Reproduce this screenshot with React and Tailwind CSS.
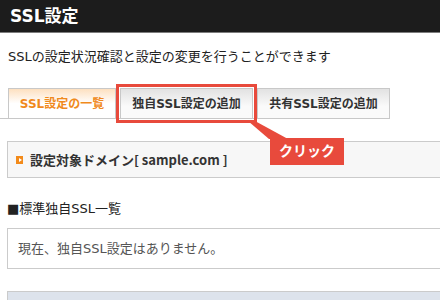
import React from "react";

const font = "font-['DejaVu_Sans','Noto_Sans_CJK_JP',sans-serif]";

const App = () => {
  return (
    <div className={`relative h-[300px] w-[440px] overflow-hidden bg-white text-[#333] ${font}`}>
      {/* Header */}
      <div className="flex h-[33px] items-center border-b border-[#7d7d7d] bg-[#1c1c1c] pl-[10px]">
        <h1 className="text-[17px] font-bold leading-none text-white">SSL設定</h1>
      </div>

      <p className="mt-[14px] pl-[8px] text-[13px] leading-[20px] text-[#222]">
        SSLの設定状況確認と設定の変更を行うことができます
      </p>

      {/* Tabs */}
      <div className="relative mt-[21px] flex w-fit border-b border-[#c8c8c8] pl-[8px]">
        <div className="-mb-px flex h-[30px] w-[108px] items-center justify-center border border-b-0 border-[#c8c8c8] bg-gradient-to-b from-[#fde0c0] to-white to-50% text-[12px] font-bold text-[#f08a1c]">
          SSL設定の一覧
        </div>
        <div className="ml-[4px] flex h-[30px] w-[133px] items-center justify-center border border-b-0 border-[#c8c8c8] bg-gradient-to-b from-[#e2e2e2] to-[#fafafa] to-60% text-[12px] font-bold text-[#333]">
          独自SSL設定の追加
        </div>
        <div className="ml-[4px] flex h-[30px] w-[133px] items-center justify-center border border-b-0 border-[#c8c8c8] bg-gradient-to-b from-[#e2e2e2] to-[#fafafa] to-60% text-[12px] font-bold text-[#333]">
          共有SSL設定の追加
        </div>
        {/* highlight */}
        <div className="absolute left-[116px] top-[-4px] h-[39px] w-[141px] border-[3px] border-[#e84a3c]" />
      </div>

      <div className="w-[470px] pl-[7px]">
        {/* Domain */}
        <div className="mt-[22px] flex h-[37px] items-center border border-[#cbcbcb] bg-[#f7f7f7] pl-[8px]">
          <span className="flex h-[8px] w-[7px] items-center justify-center bg-[#f28a1a]">
            <span className="ml-px h-0 w-0 border-y-[2px] border-l-[3px] border-y-transparent border-l-white" />
          </span>
          <span className="ml-[7px] font-['Noto_Sans_CJK_JP',sans-serif] text-[13px] font-bold leading-none text-[#333]">
            設定対象ドメイン[ sample.com ]
          </span>
        </div>

        <p className="mt-[21px] text-[13px] leading-[20px] text-[#222]">■標準独自SSL一覧</p>

        <div className="mt-[9px] flex h-[41px] items-center border border-[#cbcbcb] bg-white pl-[10px] text-[13px] text-[#555]">
          現在、独自SSL設定はありません。
        </div>

        <div className="mt-[22px] h-[30px] border border-[#cbcbcb] bg-[#dde3ec]" />
      </div>

      {/* Callout */}
      <svg className="absolute left-0 top-0" width="440" height="300" viewBox="0 0 440 300">
        <polygon points="248,121 255,121 288,139 269,139" fill="#e84a3c" />
      </svg>
      <div className="absolute left-[270px] top-[138px] flex h-[27px] w-[74px] items-center justify-center bg-[#e84a3c] text-[14px] font-bold text-white">
        クリック
      </div>
    </div>
  );
};

export default App;
